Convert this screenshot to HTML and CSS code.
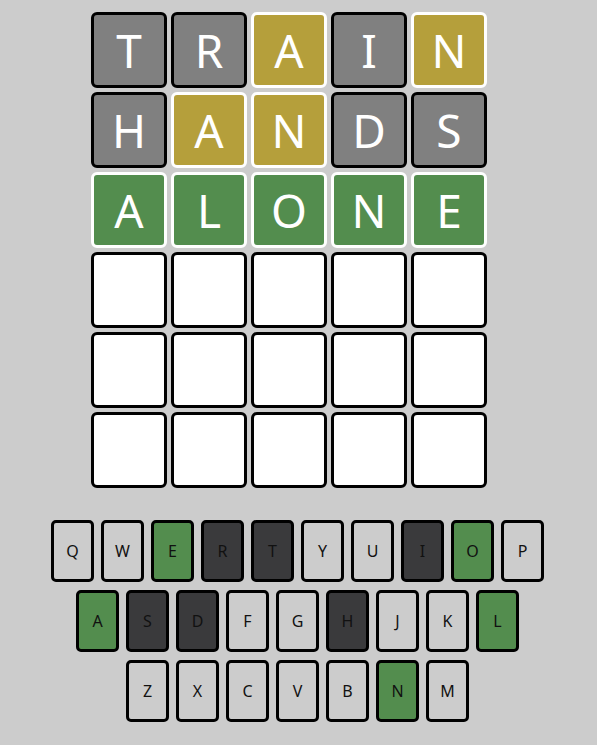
FILE: index.html
```html
<!DOCTYPE html>
<html>
<head>
<meta charset="utf-8">
<link rel="stylesheet" href="styles.css">
</head>
<body>
<div class="game">
  <div class="board">
    <div class="row">
      <div class="tile absent">T</div><div class="tile absent">R</div><div class="tile present">A</div><div class="tile absent">I</div><div class="tile present">N</div>
    </div>
    <div class="row">
      <div class="tile absent">H</div><div class="tile present">A</div><div class="tile present">N</div><div class="tile absent">D</div><div class="tile absent">S</div>
    </div>
    <div class="row">
      <div class="tile correct">A</div><div class="tile correct">L</div><div class="tile correct">O</div><div class="tile correct">N</div><div class="tile correct">E</div>
    </div>
    <div class="row">
      <div class="tile"></div><div class="tile"></div><div class="tile"></div><div class="tile"></div><div class="tile"></div>
    </div>
    <div class="row">
      <div class="tile"></div><div class="tile"></div><div class="tile"></div><div class="tile"></div><div class="tile"></div>
    </div>
    <div class="row">
      <div class="tile"></div><div class="tile"></div><div class="tile"></div><div class="tile"></div><div class="tile"></div>
    </div>
  </div>
  <div class="keyboard">
    <div class="krow">
      <div class="key">Q</div><div class="key">W</div><div class="key k-correct">E</div><div class="key k-absent">R</div><div class="key k-absent">T</div><div class="key">Y</div><div class="key">U</div><div class="key k-absent">I</div><div class="key k-correct">O</div><div class="key">P</div>
    </div>
    <div class="krow">
      <div class="key k-correct">A</div><div class="key k-absent">S</div><div class="key k-absent">D</div><div class="key">F</div><div class="key">G</div><div class="key k-absent">H</div><div class="key">J</div><div class="key">K</div><div class="key k-correct">L</div>
    </div>
    <div class="krow">
      <div class="key">Z</div><div class="key">X</div><div class="key">C</div><div class="key">V</div><div class="key">B</div><div class="key k-correct">N</div><div class="key">M</div>
    </div>
  </div>
</div>
</body>
</html>
```

FILE: styles.css
```css
html, body {
  margin: 0;
  padding: 0;
  background: #cccccc;
  font-family: "Noto Sans", "Open Sans", sans-serif;
}

.game {
  width: 597px;
  height: 745px;
  padding-top: 12px;
  box-sizing: border-box;
}

.board {
  display: flex;
  flex-direction: column;
  gap: 4px;
  margin-left: 91px;
}

.row {
  display: flex;
  gap: 4px;
}

.tile {
  width: 76px;
  height: 76px;
  box-sizing: border-box;
  border: 3px solid #000;
  border-radius: 6px;
  background: #ffffff;
  color: #ffffff;
  font-size: 46px;
  font-weight: 400;
  display: flex;
  align-items: center;
  justify-content: center;
  line-height: 1;
}

.tile.absent {
  background: #808080;
}

.tile.present {
  background: #b59f3b;
  border-color: #ffffff;
}

.tile.correct {
  background: #538d4e;
  border-color: #ffffff;
}

.keyboard {
  margin-top: 32px;
  display: flex;
  flex-direction: column;
  align-items: center;
  gap: 8px;
  margin-left: -2px;
}

.krow {
  display: flex;
  gap: 7px;
}

.key {
  width: 43px;
  height: 62px;
  box-sizing: border-box;
  border: 3px solid #000;
  border-radius: 5px;
  background: #cccccc;
  color: #111;
  font-size: 16px;
  font-weight: 400;
  display: flex;
  align-items: center;
  justify-content: center;
}

.key.k-correct {
  background: #538d4e;
}

.key.k-absent {
  background: #3a3a3c;
}
```
